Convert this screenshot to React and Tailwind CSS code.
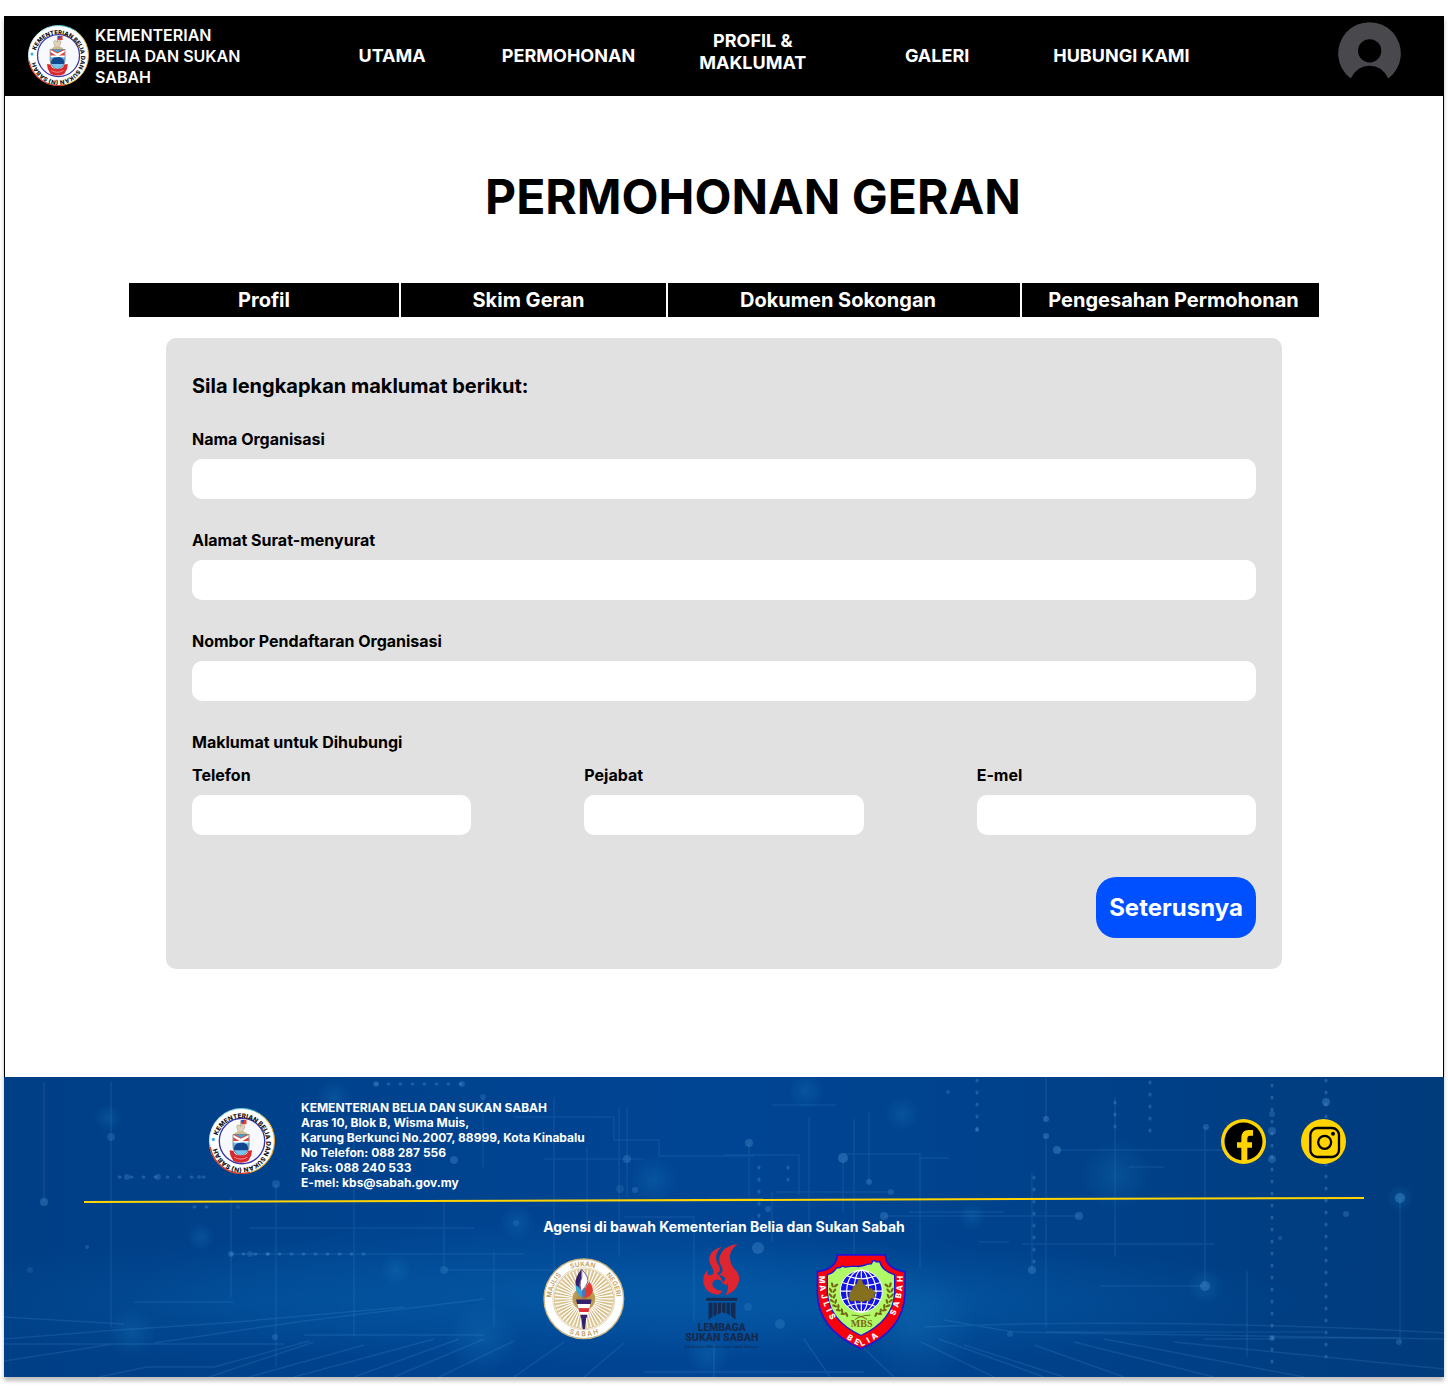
import React, { useId } from "react";

const NAV = [
  { label: "UTAMA", cls: "pl-4" },
  { label: "PERMOHONAN", cls: "" },
  { label: "PROFIL & MAKLUMAT", cls: "px-8 pb-2" },
  { label: "GALERI", cls: "" },
  { label: "HUBUNGI KAMI", cls: "" },
];

function MinistrySeal({ className }) {
  const id = useId();
  return (
    <svg viewBox="0 0 122 122" className={className} role="img" aria-label="Kementerian Belia dan Sukan Sabah">
      <defs>
        <path id={id + "c"} d="M16 51 A46 46 0 1 1 14 62" />
        <linearGradient id={id + "g"} x1="0" y1="0.2" x2="1" y2="0.6">
          <stop offset="0" stopColor="#e8f4f8" />
          <stop offset="0.5" stopColor="#27b6c8" />
          <stop offset="0.8" stopColor="#f2b632" />
          <stop offset="1" stopColor="#f2a41c" />
        </linearGradient>
      </defs>
      <circle cx="61" cy="61" r="60" fill="#fff" stroke={`url(#${id}g)`} strokeWidth="2" />
      <path d="M2 72 A60 60 0 0 0 76 119" fill="none" stroke="#e2402c" strokeWidth="2.500" />
      <circle cx="61" cy="61" r="42" fill="#f7f9fd" stroke="#3a36a8" strokeWidth="2.500" />
      <text fontFamily="Inter, sans-serif" fontSize="11.800" fontWeight="800" fill="#111">
        <textPath href={`#${id}c`}>KEMENTERIAN BELIA DAN SUKAN (N) SABAH</textPath>
      </text>
      <circle cx="8" cy="58" r="3" fill="#35aee8" />
      <g transform="translate(10 0) scale(0.8 1)">
        <path d="M61 38V23" stroke="#777" strokeWidth="1.500" />
        <path d="M62 22h12v8H62z" fill="#e53935" />
        <path d="M62 22h6v5h-6z" fill="#2456b8" />
        <path d="M53 38q-4-6 3-7l5 3 6-4q6 4 1 9l-4 6H55z" fill="#ded4bb" stroke="#9a8a66" />
        <path d="M47 46q14-7 28 0v3H47z" fill="#cdbd94" />
        <path d="M43 49H80V70Q80 84 61 89Q43 84 43 70Z" fill="#77c4ee" stroke="#666" strokeWidth="1.500" />
        <path d="M44 50h35v12H44z" fill="#e54537" />
        <path d="M44 50l17 7 18-7v4l-18 9-17-9z" fill="#fff" />
        <path d="M50 50h23l-12 5z" fill="#35a6df" />
        <path d="M44 61h35v3H44z" fill="#fff" />
        <path d="M45 75l2-6 6-4 14-1 9 4 2 7-1 3H46z" fill="#12478f" />
        <path d="M35 78l9 1q2 9 17 9t17-9l9-1-2 10-7 10q-17 6-34 0l-7-10z" fill="#d8292f" />
        <path d="M46 91q15 7 30 0" fill="none" stroke="#f8b8b6" strokeWidth="1.500" />
      </g>
    </svg>
  );
}

function Avatar() {
  return (
    <svg viewBox="114 68 189 170" className="h-[57px] w-[63px]" aria-hidden="true">
      <path
        fillRule="evenodd"
        fill="#49484d"
        d="M152 237A94 94 0 1 1 265 237Q246 199 209 199Q172 199 152 237ZM209 119a35 35 0 1 0 0 70a35 35 0 1 0 0-70Z"
      />
    </svg>
  );
}

const RAYS = Array.from({ length: 48 }, (_, i) => (i * Math.PI) / 24);

function SportsCouncilLogo() {
  return (
    <svg viewBox="41 69 241 243" className="mb-2.5 size-[82px]" role="img" aria-label="Majlis Sukan Negeri Sabah">
      <defs>
        <radialGradient id="rayFill">
          <stop offset="0" stopColor="#a9822f" />
          <stop offset="0.5" stopColor="#c9aa66" />
          <stop offset="1" stopColor="#e0cd9e" />
        </radialGradient>
        <path id="mscTop" d="M65 190A96 96 0 0 1 257 190" />
        <path id="mscBottom" d="M50 190A111 111 0 0 0 272 190" />
      </defs>
      <circle cx="161" cy="190" r="118" fill="#fff" stroke="#cdb682" strokeWidth="4" />
      <circle cx="161" cy="190" r="88" fill="url(#rayFill)" stroke="#cdb682" strokeWidth="2" />
      {RAYS.map((a) => (
        <path
          key={a}
          d={`M${161 + 34 * Math.cos(a)} ${190 + 34 * Math.sin(a)}L${161 + 87 * Math.cos(a)} ${190 + 87 * Math.sin(a)}`}
          stroke="#fff"
          strokeWidth="4"
        />
      ))}
      <circle cx="161" cy="190" r="92" fill="none" stroke="#dac793" strokeWidth="2" />
      <g fontFamily="Inter, sans-serif" fontSize="20" fontWeight="600" fill="#bfa063">
        <text><textPath href="#mscTop" startOffset="1%">MAJLIS</textPath></text>
        <text><textPath href="#mscTop" startOffset="49%" textAnchor="middle">SUKAN</textPath></text>
        <text><textPath href="#mscTop" startOffset="98%" textAnchor="end">NEGERI</textPath></text>
        <text><textPath href="#mscBottom" startOffset="50%" textAnchor="middle">S A B A H</textPath></text>
      </g>
      <path d="M153 103Q128 137 140 157L155 184Q143 150 153 130Z" fill="#33206f" />
      <path d="M155 103Q181 130 170 146Q160 158 158 184Q144 145 155 128Z" fill="#fff" stroke="#33206f" strokeWidth="2" />
      <path d="M137 149Q135 178 158 187Q158 160 137 149Z" fill="#36a9da" />
      <path d="M177 139Q198 165 178 182L160 188Q158 167 177 139Z" fill="#e23b33" />
      <path d="M159 158Q174 169 160 188Q150 174 159 158Z" fill="#4b77bd" />
      <path d="M138 192h46l-3 13h-40z" fill="#33206f" />
      <path d="M142 205h38l-3 13h-32z" fill="#fff" />
      <path d="M145 218h32l-2 11h-27z" fill="#df3039" />
      <path d="M148 229h27l-2 8h-22z" fill="#fff" />
      <path d="M151 237h20l-1 9h-18zM153 246h15l-4 34h-6z" fill="#33206f" />
    </svg>
  );
}

function SportsBoardLogo() {
  return (
    <svg viewBox="24 20 230 325" className="h-[108px] w-[77px]" role="img" aria-label="Lembaga Sukan Sabah">
      <path d="M188 26Q159 47 165 74Q168 92 181 104Q200 124 187 151Q178 171 151 180Q165 156 154 134Q147 119 130 120Q151 109 136 88Q126 70 142 48Q153 31 188 26Z" transform="translate(3 0)" fill="#df2630" />
      <path d="M143 34Q112 43 106 63Q102 80 113 96Q124 114 110 120Q97 123 101 104Q84 119 88 145Q95 174 126 178Q140 179 145 165Q130 169 119 157Q109 146 120 136Q134 128 148 143Q141 126 128 113Q143 110 134 91Q121 74 128 54Q133 42 143 34Z" fill="#df2630" />
      <path d="M155 123q11 13 3 27l-18-8q12 1 15-19Z" fill="#df2630" />
      <path d="M96 188h93v9H96z" fill="#152a50" />
      <path d="M103 203h12v40l-12 12zM118 203h10v34l-10 7zM131 203h10v30l-10 5zM144 203h10v32l-10-4zM157 203h10v39l-10-8zM170 203h14v51l-14-13z" fill="#152a50" />
      <g fontFamily="Roboto, sans-serif" fontWeight="900" fill="#152a50" textAnchor="middle">
        <text x="143" y="288" fontSize="31">LEMBAGA</text>
        <text x="143" y="318" fontSize="32">SUKAN SABAH</text>
        <text x="143" y="340" fontSize="11" fontWeight="400">Kementerian Belia dan Sukan Sabah Malaysia</text>
      </g>
    </svg>
  );
}

const LEAVES = [
  [82, 122, 20], [77, 138, 5], [77, 154, -10], [81, 170, -20], [89, 185, -35], [100, 198, -45], [114, 209, -60],
];

function YouthCouncilLogo() {
  return (
    <svg viewBox="33 27 270 290" className="h-[97px] w-[90px]" role="img" aria-label="Majlis Belia Sabah">
      <defs>
        <path id="ybLeft" d="M42 94Q42 172 84 238" />
        <path id="ybBottom" d="M108 270Q134 294 169 307Q204 294 236 264" />
        <path id="ybRight" d="M263 228Q294 172 294 94" />
      </defs>
      <path d="M97 32H241Q242 74 300 83V145Q299 258 168 314Q38 256 37 145V82Q94 75 97 32Z" fill="#f9000d" stroke="#1c16d8" strokeWidth="5" />
      <path d="M67 91Q84 88 94 72L105 70 112 66 120 69 147 66 160 67 176 64 188 60 199 59 203 51 211 49 213 53 224 52Q231 80 269 92V145Q265 229 168 274Q72 229 67 145Z" fill="#b0fa67" stroke="#1c16d8" strokeWidth="4" />
      <g fill="#746818">
        {LEAVES.map(([x, y, r]) => (
          <g key={y}>
            <ellipse cx={x} cy={y} rx="3.500" ry="8" transform={`rotate(${r - 35} ${x} ${y})`} />
            <ellipse cx={x + 11} cy={y + 2} rx="3.500" ry="8" transform={`rotate(${r + 35} ${x + 11} ${y + 2})`} />
            <ellipse cx={338 - x} cy={y} rx="3.500" ry="8" transform={`rotate(${35 - r} ${338 - x} ${y})`} />
            <ellipse cx={327 - x} cy={y + 2} rx="3.500" ry="8" transform={`rotate(${-r - 35} ${327 - x} ${y + 2})`} />
          </g>
        ))}
      </g>
      <path d="M140 213q28 0 46 13M196 213q-28 0-46 13" fill="none" stroke="#746818" strokeWidth="3" />
      <circle cx="169" cy="141" r="63" fill="#1213e6" stroke="#fff" strokeWidth="3" />
      <g fill="none" stroke="#fff" strokeWidth="3.500">
        <ellipse cx="169" cy="141" rx="22" ry="63" />
        <ellipse cx="169" cy="141" rx="44" ry="63" />
        <path d="M169 78v126M106 141h126M111 115q58 20 116 0M111 167q58-20 116 0M125 95q44 18 88 0M125 187q44-18 88 0" />
      </g>
      <path d="M132 164l1-18 8-5 4-14 10-5 5-15 9-2 5 14 8 6 6 10 12-3 4 9 10 5-8 6 6 7-12 2-8 11-10-4-8 5-20-4-15 2z" fill="#84701f" stroke="#6b5a14" strokeWidth="2" />
      <text x="170" y="249" fontFamily="Liberation Serif, serif" fontSize="30" fontWeight="700" fill="#7c6613" textAnchor="middle">MBS</text>
      <g fontFamily="Inter, sans-serif" fontSize="24" fontWeight="800" fill="#fff">
        <text><textPath href="#ybLeft" startOffset="1%">{"M\u00a0A\u00a0\u00a0J\u00a0\u00a0L\u00a0\u00a0I\u00a0\u00a0S"}</textPath></text>
        <text><textPath href="#ybBottom" startOffset="50%" textAnchor="middle">{"B\u00a0\u00a0E\u00a0\u00a0L\u00a0\u00a0I\u00a0\u00a0A"}</textPath></text>
        <text><textPath href="#ybRight" startOffset="99%" textAnchor="end">{"S\u00a0\u00a0A\u00a0\u00a0B\u00a0A\u00a0\u00a0H"}</textPath></text>
      </g>
    </svg>
  );
}

function FacebookIcon() {
  return (
    <svg viewBox="0 0 135 135" className="size-[45px]" aria-hidden="true">
      <circle cx="67.500" cy="67.500" r="67.500" fill="#ffd400" />
      <circle cx="67.500" cy="67.500" r="57" fill="#000" />
      <path d="M61 130V86H48V70H61V58Q61 33 83 33H96V50H87Q79 50 79 59V70H93V86H79V130Z" fill="#ffd400" />
    </svg>
  );
}

function InstagramIcon() {
  return (
    <svg viewBox="0 0 135 135" className="size-[45px]" aria-hidden="true">
      <circle cx="67.500" cy="67.500" r="67.500" fill="#ffd400" />
      <rect x="28" y="27" width="86" height="87" rx="21" fill="none" stroke="#000" strokeWidth="7" />
      <circle cx="71" cy="70" r="19.500" fill="none" stroke="#000" strokeWidth="7" />
      <circle cx="96" cy="44" r="6" fill="#000" />
    </svg>
  );
}

/* Circuit backdrop: [x, y, radius, opacity] */
const NODES = [
  [107, 60, 4, 0.25], [40, 125, 4, 0.35], [123, 100, 3, 0.3], [154, 100, 3, 0.3], [195, 100, 2, 0.3],
  [83, 170, 2, 0.3], [26, 193, 3, 0.2], [272, 107, 4, 0.3], [450, 83, 4, 0.35], [479, 20, 3, 0.25],
  [623, 82, 4, 0.3], [631, 113, 3, 0.3], [440, 193, 4, 0.25], [271, 260, 3, 0.3], [227, 177, 3, 0.3],
  [246, 177, 3, 0.25], [264, 177, 2, 0.3], [372, 7, 3, 0.3], [458, 7, 3, 0.3], [745, 66, 4, 0.35],
  [839, 81, 5, 0.4], [865, 105, 3, 0.35], [887, 115, 3, 0.3], [944, 15, 2, 0.3], [973, 53, 2, 0.4],
  [1042, 42, 3, 0.4], [1042, 59, 3, 0.4], [1053, 73, 4, 0.4], [1202, 50, 3, 0.35], [1268, 37, 3, 0.3],
  [1268, 54, 4, 0.35], [1268, 82, 4, 0.35], [1322, 25, 4, 0.4], [1396, 121, 5, 0.4], [1342, 137, 3, 0.3],
  [880, 139, 4, 0.35], [1075, 139, 4, 0.35], [1028, 193, 4, 0.35], [1201, 209, 5, 0.35], [754, 171, 6, 0.35],
  [776, 247, 5, 0.25], [744, 230, 4, 0.2], [764, 132, 3, 0.3], [1268, 261, 3, 0.3], [1395, 265, 3, 0.3],
  [1006, 257, 3, 0.25], [1276, 161, 2, 0.3], [234, 130, 2, 0.25], [616, 112, 4, 0.2], [512, 146, 3, 0.2],
];

const GLOWS = [
  [104, 41, 14], [197, 160, 14], [802, 14, 18], [898, 37, 18], [1112, 98, 36], [912, 250, 60],
  [704, 278, 22], [650, 102, 24], [513, 145, 18], [968, 139, 14], [330, 20, 18], [128, 255, 24],
  [392, 193, 16], [478, 262, 36], [1201, 209, 18], [1396, 121, 14],
];

const TRACES =
  "M40 5V125M107 5V250M227 120V220M350 40V260M440 125V193H610M479 20V90M245 151H470M490 175V250M227 177H520M130 225H230" +
  "M510 40H610V63H655V79H750M272 107V290M550 20V230M583 70V260M623 30V120M640 82H540M620 140H690V245M615 30V180" +
  "M745 66V120M720 78H795V118M839 81V135M839 77H916V190M916 81H945M772 115H887M768 115V165M905 135H1000M805 40V160" +
  "M850 42V190M865 35V105M1042 0V42M1042 59V250M1053 73H1220M880 139H1075M1018 167H1210M1028 95V193M1096 209H1201" +
  "M1201 50V209M1111 20V180M1396 121V265M1243 194V280M1268 261H1395M1042 255H1320M768 28H832M975 165H1005M1125 90H1160";

const DOTTED =
  "M372 7H458M973 3V53M1111 25V60M1146 5V60M1268 8V290M1322 3V290M227 177H370M115 100H210M1030 100V190M755 90V160M784 90V110M190 130H205";

const FLOOR =
  "M205 300L310 265M95 300L143 290H210L305 264M245 300L360 268M290 300L430 262M350 300L455 262M390 300L480 262" +
  "M435 300L510 264M510 300L560 265M580 300L620 266M0 267H280M0 262L100 254L220 246L400 230M0 284L110 267" +
  "M150 266L300 244L480 222M300 258H480M0 240L120 247M800 262L826 300M850 262L890 300M917 265L990 300" +
  "M935 262L1040 300M1030 268L1120 300M1070 265L1210 300M1100 262L1300 300M1170 265L1440 292M1200 262H1270" +
  "M940 243L1010 255L1440 262M920 250Q1150 240 1440 256M960 268L1060 300M710 268V300M640 295H860";

function CircuitBackdrop() {
  return (
    <svg viewBox="0 0 1440 300" preserveAspectRatio="xMidYMid slice" className="absolute inset-0 -z-10 h-full w-full" aria-hidden="true">
      <defs>
        <linearGradient id="bgBase" x1="0" x2="1" y1="0" y2="0">
          <stop offset="0" stopColor="#003f86" />
          <stop offset="0.25" stopColor="#00428d" />
          <stop offset="0.5" stopColor="#004594" />
          <stop offset="0.8" stopColor="#004087" />
          <stop offset="1" stopColor="#003b7c" />
        </linearGradient>
        <radialGradient id="bgMist">
          <stop offset="0" stopColor="#0868b4" stopOpacity="0.450" />
          <stop offset="1" stopColor="#0868b4" stopOpacity="0" />
        </radialGradient>
        <radialGradient id="bgGlow">
          <stop offset="0" stopColor="#1f8acb" stopOpacity="0.220" />
          <stop offset="1" stopColor="#1f8acb" stopOpacity="0" />
        </radialGradient>
      </defs>
      <rect width="1440" height="300" fill="url(#bgBase)" />
      <ellipse cx="560" cy="215" rx="430" ry="75" fill="url(#bgMist)" />
      <ellipse cx="880" cy="225" rx="420" ry="60" fill="url(#bgMist)" />
      <ellipse cx="240" cy="225" rx="340" ry="60" fill="url(#bgMist)" opacity="0.600" />
      {GLOWS.map(([x, y, r]) => (
        <circle key={`${x}-${y}`} cx={x} cy={y} r={r} fill="url(#bgGlow)" />
      ))}
      <g fill="none" stroke="#58a6e0">
        <path d={TRACES} strokeOpacity="0.140" strokeWidth="1.500" />
        <path d={DOTTED} strokeOpacity="0.300" strokeWidth="3" strokeLinecap="round" strokeDasharray="1 11" />
        <path d={FLOOR} strokeOpacity="0.160" strokeWidth="1.500" />
      </g>
      {NODES.map(([x, y, r, o]) => (
        <circle key={`${x}-${y}`} cx={x} cy={y} r={r} fill="#4c93cf" opacity={o} />
      ))}
    </svg>
  );
}

function Field({ id, label, type = "text", className = "" }) {
  return (
    <div className={className}>
      <label htmlFor={id} className="block text-base leading-5 font-bold">
        {label}
      </label>
      <input id={id} type={type} className="mt-2.5 block h-10 w-full rounded-[10px] bg-white px-3 text-base" />
    </div>
  );
}

export default function App() {
  return (
    <div className="bg-white px-1 pt-4 pb-3.5 font-['Inter',sans-serif] text-black">
      <div className="shadow-[0_4px_4px_rgba(0,0,0,0.25)]">
        <header className="flex h-20 items-center bg-black text-white">
          <div className="flex w-1/5 items-center gap-1.5 pb-0.5 pl-6">
            <MinistrySeal className="size-[61px] shrink-0" />
            <p className="w-[150px] pt-0.5 text-base leading-[21px] font-semibold">KEMENTERIAN BELIA DAN SUKAN SABAH</p>
          </div>
          <nav className="grid flex-1 grid-cols-5 items-center text-center text-lg leading-[22px] font-bold">
            {NAV.map((n) => (
              <a key={n.label} href="#" className={n.cls}>
                {n.label}
              </a>
            ))}
          </nav>
          <div className="flex w-[16%] justify-end self-start pt-1.5 pr-[43px]">
            <button type="button" aria-label="Akaun">
              <Avatar />
            </button>
          </div>
        </header>

        <main className="border-x border-black bg-white px-[124px] pt-[72px] pb-[108px]">
          <h1 className="pl-[58px] text-center text-5xl leading-[58px] font-bold">PERMOHONAN GERAN</h1>

          <div className="mt-[57px] grid grid-cols-[270fr_265fr_352fr_297fr] gap-0.5 text-center text-xl leading-[34px] font-bold whitespace-nowrap text-white">
            <button type="button" className="bg-black">Profil</button>
            <button type="button" className="bg-black pr-2.5">Skim Geran</button>
            <button type="button" className="bg-black pr-3">Dokumen Sokongan</button>
            <button type="button" className="bg-black pl-1.5">Pengesahan Permohonan</button>
          </div>

          <form className="mx-[37px] mt-[21px] rounded-[10px] bg-[#e1e1e1] px-[26px] pt-9 pb-[31px]" onSubmit={(e) => e.preventDefault()}>
            <h2 className="text-xl leading-6 font-bold">Sila lengkapkan maklumat berikut:</h2>
            <Field id="nama" label="Nama Organisasi" className="mt-[31px]" />
            <Field id="alamat" label="Alamat Surat-menyurat" className="mt-[31px]" />
            <Field id="nombor" label="Nombor Pendaftaran Organisasi" className="mt-[31px]" />
            <fieldset className="mt-[31px]">
              <legend className="text-base leading-5 font-bold">Maklumat untuk Dihubungi</legend>
              <div className="mt-[13px] grid grid-cols-3 gap-[113px]">
                <Field id="telefon" label="Telefon" type="tel" />
                <Field id="pejabat" label="Pejabat" type="tel" />
                <Field id="emel" label="E-mel" type="email" />
              </div>
            </fieldset>
            <div className="mt-[42px] flex justify-end">
              <button type="submit" className="h-[61px] w-40 rounded-[20px] bg-[#0050ff] text-2xl font-bold text-white">
                Seterusnya
              </button>
            </div>
          </form>
        </main>

        <footer className="relative isolate overflow-hidden px-20 pt-[23px] pb-[27px] text-white">
          <CircuitBackdrop />
          <div className="flex items-start pr-[18px] pl-[125px]">
            <MinistrySeal className="mt-2 size-[66px]" />
            <address className="ml-[26px] flex-1 text-xs leading-[15px] font-bold not-italic">
              KEMENTERIAN BELIA DAN SUKAN SABAH
              <br />
              Aras 10, Blok B, Wisma Muis,
              <br />
              Karung Berkunci No.2007, 88999, Kota Kinabalu
              <br />
              No Telefon: 088 287 556
              <br />
              Faks: 088 240 533
              <br />
              E-mel: kbs@sabah.gov.my
            </address>
            <div className="mt-[19px] flex gap-[35px]">
              <a href="#" aria-label="Facebook">
                <FacebookIcon />
              </a>
              <a href="#" aria-label="Instagram">
                <InstagramIcon />
              </a>
            </div>
          </div>
          <svg viewBox="0 0 1280 6" preserveAspectRatio="none" className="mt-[7px] h-1.5 w-full" aria-hidden="true">
            <path d="M0 5L1280 1" stroke="#ffd400" strokeWidth="2" />
          </svg>
          <p className="mt-3.5 text-center text-sm leading-5 font-bold">Agensi di bawah Kementerian Belia dan Sukan Sabah</p>
          <div className="mt-[5px] flex items-end justify-center gap-[57px]">
            <SportsCouncilLogo />
            <SportsBoardLogo />
            <YouthCouncilLogo />
          </div>
        </footer>
      </div>
    </div>
  );
}
